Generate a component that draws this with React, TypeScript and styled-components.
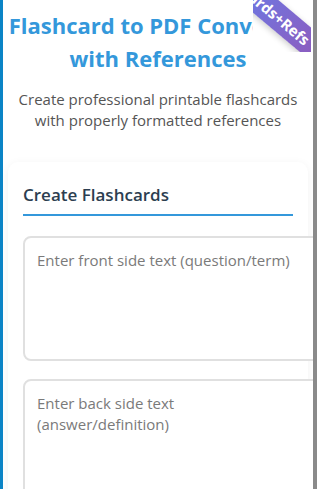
import React from 'react';
import styled, { createGlobalStyle } from 'styled-components';

const GlobalStyle = createGlobalStyle`
  html, body {
    margin: 0;
    padding: 0;
    background: #ffffff;
  }
  body {
    font-family: "Open Sans", "Noto Sans", sans-serif;
  }
`;

const App = () => {
  return (
    <>
      <GlobalStyle />
      <Frame>
        <Ribbon>
          <RibbonBand>Cards+Refs</RibbonBand>
        </Ribbon>
        <Header>
          <Title>Flashcard to PDF Converter with References</Title>
          <Subtitle>Create professional printable flashcards with properly formatted references</Subtitle>
        </Header>
        <Card>
          <CardTitle>Create Flashcards</CardTitle>
          <TextArea placeholder="Enter front side text (question/term)" />
          <TextArea placeholder="Enter back side text (answer/definition)" />
        </Card>
      </Frame>
    </>
  );
};

const Frame = styled.div`
  position: relative;
  width: 317px;
  height: 489px;
  box-sizing: border-box;
  border-left: 3px solid #0b84c6;
  border-right: 4px solid #8a8a8a;
  overflow: hidden;
  background: #ffffff;
`;

const Ribbon = styled.div`
  position: absolute;
  top: 0;
  right: 2px;
  width: 58px;
  height: 52px;
  overflow: hidden;
  background: #ffffff;
  z-index: 2;
`;

const RibbonBand = styled.div`
  position: absolute;
  top: 2px;
  left: -37px;
  width: 120px;
  height: 26px;
  line-height: 26px;
  transform: rotate(40deg);
  background: linear-gradient(90deg, #667eea 0%, #8e5bbd 100%);
  color: #ffffff;
  font-size: 15px;
  font-weight: 700;
  text-align: center;
  white-space: nowrap;
  box-shadow: 0 2px 6px rgba(0, 0, 0, 0.2);
`;

const Header = styled.header`
  text-align: center;
  padding: 9px 3px 0;
`;

const Title = styled.h1`
  margin: 0;
  font-size: 22px;
  line-height: 33px;
  font-weight: 700;
  color: #3498db;
`;

const Subtitle = styled.p`
  margin: 14px 0 31px;
  font-size: 15px;
  line-height: 21px;
  color: #555555;
`;

const Card = styled.section`
  margin: 0 5px;
  padding: 21px 15px;
  background: #ffffff;
  border-radius: 10px;
  box-shadow: 0 2px 10px rgba(0, 0, 0, 0.06);
`;

const CardTitle = styled.h2`
  margin: 0 0 20px;
  padding-bottom: 8px;
  font-size: 17px;
  font-weight: 600;
  color: #2c3e50;
  border-bottom: 2px solid #3498db;
`;

const TextArea = styled.textarea`
  display: block;
  width: 100%;
  min-height: 97px;
  margin: 0 0 18px;
  padding: 12px;
  border: 2px solid #e0e0e0;
  border-radius: 8px;
  font-family: "Open Sans", "Noto Sans", sans-serif;
  font-size: 15px;
  line-height: 21px;
  color: #333333;
  resize: none;
  &::placeholder {
    color: #7a7a7a;
  }
`;

export default App;
